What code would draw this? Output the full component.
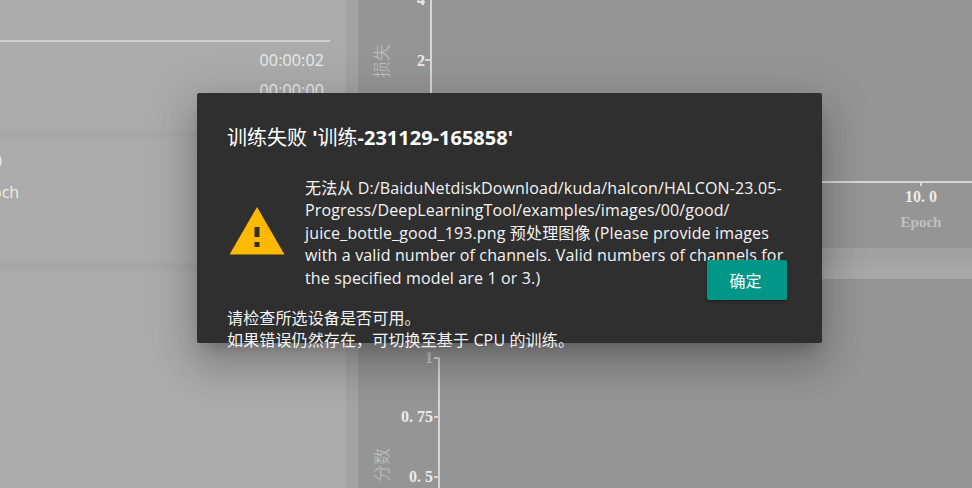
<div class="page">
  <section class="left">
    <div class="rule"></div>
    <div class="times">
      <span>00:00:02</span>
      <span>00:00:00</span>
    </div>
    <div class="band first"></div>
    <div class="stats">
      <span class="zero">0</span>
      <span class="epoch">och</span>
    </div>
    <div class="band second"></div>
  </section>
  <div class="gutter"></div>
  <section class="right">
    <svg class="chart" viewBox="358 0 614 488" width="614" height="488">
      <g class="axis">
        <line x1="431" y1="0" x2="431" y2="100" />
        <line x1="425" y1="60" x2="431" y2="60" />
        <line x1="810" y1="182" x2="972" y2="182" />
        <line x1="921" y1="182" x2="921" y2="186" />
        <line x1="439" y1="358" x2="439" y2="488" />
        <line x1="434" y1="358" x2="439" y2="358" />
        <line x1="434" y1="417" x2="439" y2="417" />
        <line x1="434" y1="477" x2="439" y2="477" />
      </g>
      <g class="tick">
        <text x="425" y="5" text-anchor="end">4</text>
        <text x="425" y="66" text-anchor="end">2</text>
        <text x="937" y="202" text-anchor="end">10. 0</text>
        <text x="433" y="363" text-anchor="end" class="dim">1</text>
        <text x="433" y="422" text-anchor="end">0. 75</text>
        <text x="433" y="482" text-anchor="end">0. 5</text>
      </g>
      <text x="921" y="227" text-anchor="middle" class="name">Epoch</text>
      <text transform="translate(388 61) rotate(-90)" text-anchor="middle" class="cjk">损失</text>
      <text transform="translate(388 465) rotate(-90)" text-anchor="middle" class="cjk">分数</text>
    </svg>
    <div class="strip"></div>
  </section>

  <div class="dialog" role="alertdialog">
    <h2><span class="thin">训练失败</span> '<span class="thin">训练</span>-231129-165858'</h2>
    <div class="content">
      <svg class="warn" viewBox="0 0 24 24" width="60" height="60">
        <path d="M1 21h22L12 2 1 21zm12-3h-2v-2h2v2zm0-4h-2v-4h2v4z" />
      </svg>
      <p>无法从 D:/BaiduNetdiskDownload/kuda/halcon/HALCON-23.05-Progress/DeepLearningTool/examples/images/00/good/<br />juice_bottle_good_193.png 预处理图像 (Please provide images with a valid number of channels. Valid numbers of channels for the specified model are 1 or 3.)</p>
    </div>
    <p class="hint">请检查所选设备是否可用。<br />如果错误仍然存在，可切换至基于 CPU 的训练。</p>
    <button type="button">确定</button>
  </div>
</div>

<style>
  :global(body) {
    margin: 0;
    background: #959595;
  }

  .page {
    position: relative;
    display: flex;
    width: 972px;
    height: 488px;
    overflow: hidden;
    font-family: "Open Sans", "Noto Sans CJK SC", sans-serif;
  }

  .left {
    display: flex;
    flex-direction: column;
    width: 346px;
    background: #ababab;
    color: #ececec;
    font-size: 16px;
  }

  .rule {
    width: 330px;
    height: 2px;
    margin-top: 40px;
    background: #cfcfcf;
  }

  .times {
    display: flex;
    flex-direction: column;
    align-items: flex-end;
    gap: 8px;
    margin-top: 7px;
    padding-right: 22px;
    line-height: 22px;
    letter-spacing: 0.14px;
  }

  .band {
    background: #a6a6a6;
  }

  .band.first {
    height: 6px;
    margin-top: 30px;
  }

  .band.second {
    height: 8px;
  }

  .stats {
    display: flex;
    flex-direction: column;
    height: 126px;
    gap: 9px;
    padding-top: 13px;
    box-sizing: border-box;
    line-height: 22px;
  }

  .zero {
    margin-left: -7px;
  }

  .epoch {
    margin-left: -8px;
    color: #f0ece0;
  }

  .gutter {
    width: 12px;
    background: #a2a2a2;
  }

  .right {
    position: relative;
    flex: 1;
    background: #959595;
  }

  .chart {
    position: absolute;
    inset: 0;
    display: block;
  }

  .axis line {
    stroke: #d6d6d6;
    stroke-width: 2;
  }

  .tick text {
    font-family: "Liberation Serif", "DejaVu Serif", serif;
    font-size: 16px;
    font-weight: 700;
    fill: #ececec;
  }

  .tick text.dim {
    fill: #c4c4c4;
  }

  .name {
    font-family: "Liberation Serif", serif;
    font-size: 15px;
    font-weight: 700;
    fill: #c0c0c0;
  }

  .cjk {
    font-family: "Noto Sans CJK SC", sans-serif;
    font-size: 17px;
    font-weight: 300;
    fill: #c2c2c2;
  }

  .strip {
    position: absolute;
    top: 248px;
    left: 0;
    right: 0;
    height: 31px;
    background: linear-gradient(#a2a2a2 0 12px, #a4a4a4 12px 20px, #a8a8a8 20px);
  }

  .dialog {
    position: absolute;
    top: 93px;
    left: 197px;
    box-sizing: border-box;
    width: 625px;
    height: 250px;
    padding: 30px 30px 0;
    border-radius: 2px;
    background: #2f2f2f;
    color: #fff;
    box-shadow:
      0 11px 15px -7px rgba(0, 0, 0, 0.2),
      0 24px 38px 3px rgba(0, 0, 0, 0.14),
      0 9px 46px 8px rgba(0, 0, 0, 0.12);
  }

  h2 {
    margin: 0;
    font-size: 20px;
    line-height: 30px;
    font-weight: 700;
  }

  .thin {
    font-weight: 400;
  }

  .content {
    display: flex;
    align-items: center;
    margin-top: 24px;
  }

  .warn {
    flex: none;
    margin-top: -2px;
    margin-right: 18px;
    fill: #ffb900;
  }

  p {
    margin: 0;
    font-size: 16px;
    line-height: 22.4px;
    letter-spacing: 0.14px;
    color: #f4f4f4;
  }

  .content p {
    width: 482px;
  }

  .hint {
    margin-top: 18px;
  }

  button {
    position: absolute;
    top: 167px;
    left: 510px;
    width: 80px;
    height: 40px;
    padding: 0 3px 0 0;
    border: 0;
    border-radius: 2px;
    background: #009688;
    color: #fff;
    font: 400 16px "Noto Sans CJK SC", sans-serif;
    box-shadow: 0 1px 3px rgba(0, 0, 0, 0.4);
  }
</style>
